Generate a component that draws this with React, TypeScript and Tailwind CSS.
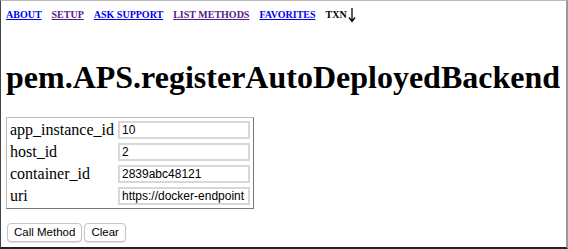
import React from 'react'

const serif = { fontFamily: '"Liberation Serif", "Times New Roman", serif' }
const sans = { fontFamily: '"Liberation Sans", Arial, sans-serif' }

const navLinks = ['ABOUT', 'SETUP', 'ASK SUPPORT', 'LIST METHODS', 'FAVORITES']

const params = [
  { name: 'app_instance_id', value: '10' },
  { name: 'host_id', value: '2' },
  { name: 'container_id', value: '2839abc48121' },
  { name: 'uri', value: 'https://docker-endpoint' },
]

export default function App() {
  return (
    <div
      className="w-[568px] h-[249px] overflow-hidden bg-white border-l border-t border-l-[#444] border-t-[#bbb] border-r-2 border-r-[#999] border-b-2 border-b-[#222] text-black"
      style={serif}
    >
      <div className="flex items-center pl-[5px] pt-[6px] gap-[10px] text-[10px] font-bold leading-[14px]">
        {navLinks.map((l, i) => (
          <a key={l} href="#" className={'underline ' + (i === 1 || i === 3 ? 'text-[#551a8b]' : 'text-[#0000ee]')}>
            {l}
          </a>
        ))}
        <span className="flex items-center">
          TXN
          <svg width="8" height="16" viewBox="0 0 8 16" className="ml-[1px]">
            <path d="M4 1 V14 M1 10.5 L4 14.5 L7 10.5" stroke="black" strokeWidth="1.3" fill="none" />
          </svg>
        </span>
      </div>
      <h1 className="text-[32px] font-bold leading-[37px] mt-[36px] ml-[5px]" style={serif}>
        pem.APS.registerAutoDeployedBackend
      </h1>
      <table className="mt-[21px] ml-[5px] border border-[#bbb] border-r-[#777] border-b-[#777] border-separate border-spacing-[2px]">
        <tbody>
          {params.map((p) => (
            <tr key={p.name}>
              <td className="text-[16px] leading-[18px] p-[1px] w-[106px] align-middle">{p.name}</td>
              <td className="p-[1px] leading-none">
                <input
                  readOnly
                  value={p.value}
                  className="block w-[132px] h-[18px] border-2 border-[#d8d8d8] px-[2px] text-[12px] outline-none"
                  style={sans}
                />
              </td>
            </tr>
          ))}
        </tbody>
      </table>
      <div className="flex gap-[2px] ml-[6px] mt-[14px]" style={sans}>
        <button className="h-[19px] px-[6px] text-[11.5px] leading-none bg-white border border-[#c4c4c4] rounded-[4px] shadow-[0_1px_1px_rgba(0,0,0,0.12)]">
          Call Method
        </button>
        <button className="h-[19px] px-[6px] text-[11.5px] leading-none bg-white border border-[#c4c4c4] rounded-[4px] shadow-[0_1px_1px_rgba(0,0,0,0.12)]">
          Clear
        </button>
      </div>
    </div>
  )
}
